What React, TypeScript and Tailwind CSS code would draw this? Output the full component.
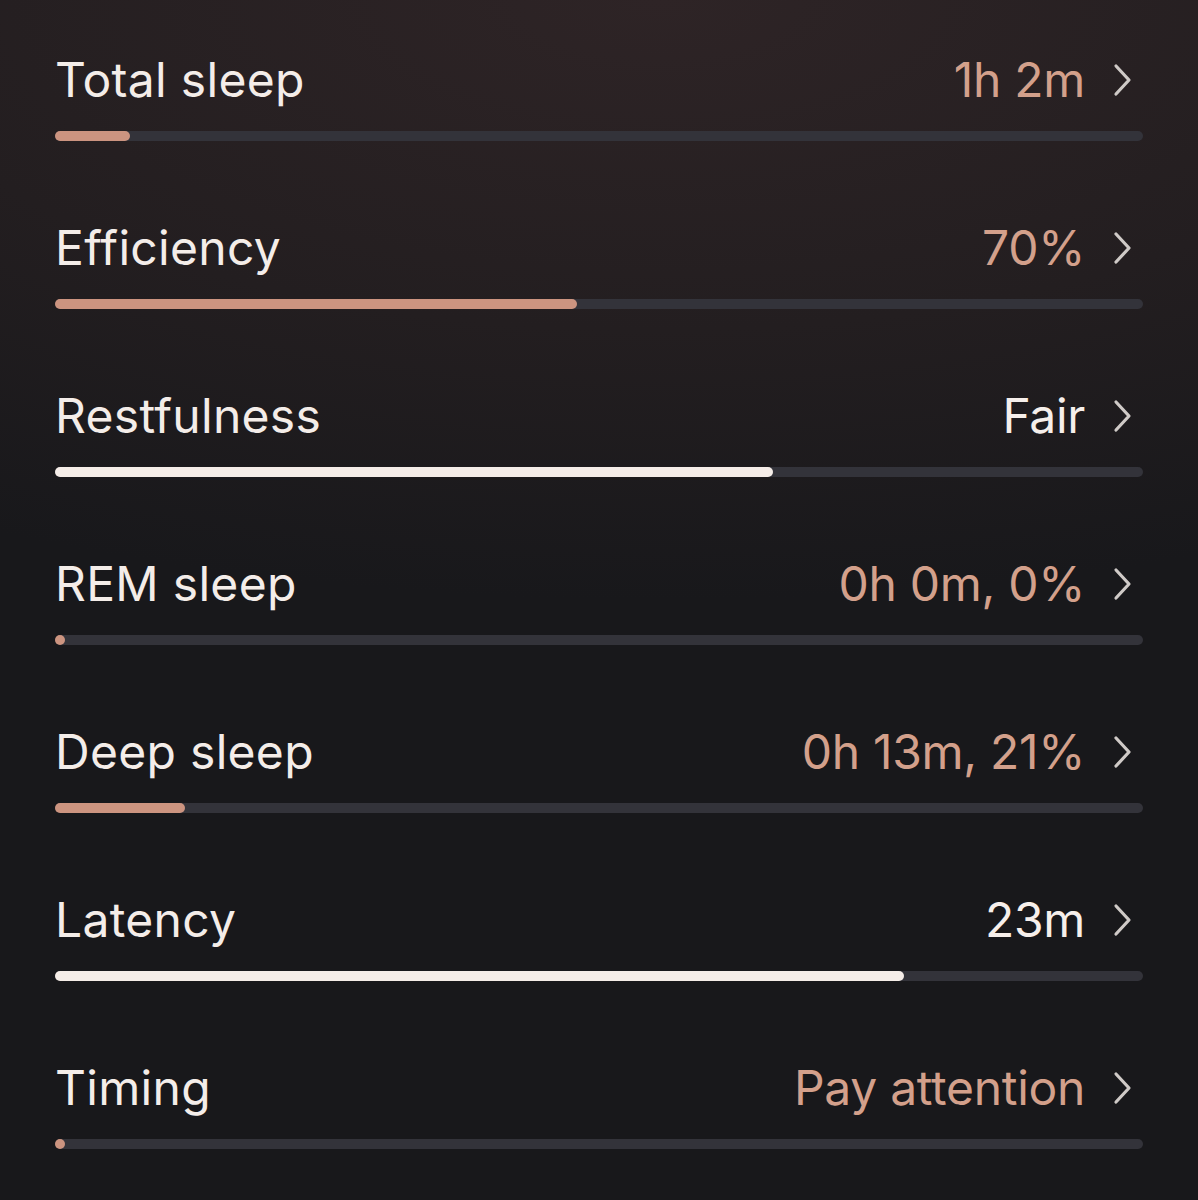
import React from "react";

type Metric = {
  label: string;
  value: string;
  fill: number;
  tone: "warm" | "light";
};

const metrics: Metric[] = [
  { label: "Total sleep", value: "1h 2m", fill: 75, tone: "warm" },
  { label: "Efficiency", value: "70%", fill: 522, tone: "warm" },
  { label: "Restfulness", value: "Fair", fill: 718, tone: "light" },
  { label: "REM sleep", value: "0h 0m, 0%", fill: 10, tone: "warm" },
  { label: "Deep sleep", value: "0h 13m, 21%", fill: 130, tone: "warm" },
  { label: "Latency", value: "23m", fill: 849, tone: "light" },
  { label: "Timing", value: "Pay attention", fill: 10, tone: "warm" },
];

const Chevron = () => (
  <svg width="20" height="34" viewBox="0 0 20 34" fill="none" className="shrink-0">
    <path
      d="M3 3 L16 17 L3 31"
      stroke="#cfcac7"
      strokeWidth="3.2"
      strokeLinecap="round"
      strokeLinejoin="round"
    />
  </svg>
);

const MetricRow = ({ metric }: { metric: Metric }) => {
  const warm = metric.tone === "warm";
  return (
    <div className="flex flex-col h-[168px]">
      <div className="flex items-center justify-between h-[56px]">
        <span className="text-[48px] leading-[56px] text-[#f4ede9] tracking-[0.3px]">
          {metric.label}
        </span>
        <div className="flex items-center gap-[28px] pr-[10px]">
          <span
            className={
              warm
                ? "text-[48px] leading-[56px] text-[#d3a08b] tracking-[-0.3px]"
                : "text-[48px] leading-[56px] text-[#f6efeb] tracking-[-0.3px]"
            }
          >
            {metric.value}
          </span>
          <Chevron />
        </div>
      </div>
      <div className="mt-[23px] h-[10px] w-full rounded-full bg-[#33333a]">
        <div
          className={
            warm
              ? "h-full rounded-full bg-[#cc9480]"
              : "h-full rounded-full bg-[#f5ede8]"
          }
          style={{ width: `${metric.fill}px` }}
        />
      </div>
    </div>
  );
};

const App = () => {
  return (
    <div
      className="w-[1198px] h-[1200px] overflow-hidden px-[55px] pt-[52px] bg-[radial-gradient(ellipse_120%_50%_at_55%_0%,#2e2426_0%,#231e20_55%,#18181b_100%)]"
      style={{ fontFamily: '"Inter", "Liberation Sans", sans-serif' }}
    >
      {metrics.map((m) => (
        <MetricRow key={m.label} metric={m} />
      ))}
    </div>
  );
};

export default App;
